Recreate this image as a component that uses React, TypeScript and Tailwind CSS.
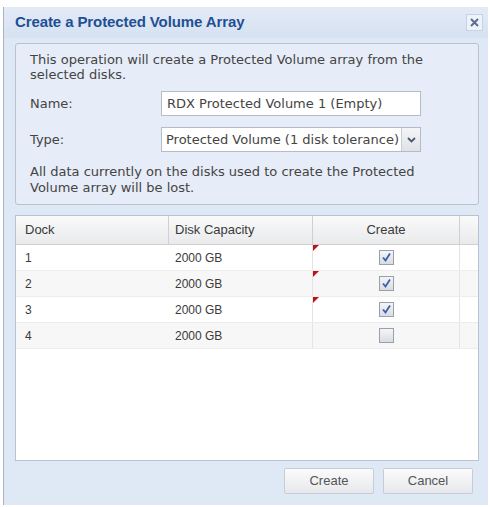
import React from "react";

const rows = [
  { dock: "1", cap: "2000 GB", checked: true, dirty: true },
  { dock: "2", cap: "2000 GB", checked: true, dirty: true },
  { dock: "3", cap: "2000 GB", checked: true, dirty: true },
  { dock: "4", cap: "2000 GB", checked: false, dirty: false },
];

function Check({ checked }: { checked: boolean }) {
  return (
    <div className="w-[15px] h-[15px] border border-[#9aa0aa] bg-gradient-to-b from-[#f4f5f7] to-[#d9dce1] flex items-center justify-center">
      {checked && (
        <svg width="11" height="11" viewBox="0 0 11 11">
          <path d="M2 5.5 L4.5 8.5 L9 1.5" fill="none" stroke="#3b5fb0" strokeWidth="1.8" />
        </svg>
      )}
    </div>
  );
}

export default function App() {
  return (
    <div
      className="w-[490px] h-[507px] bg-white pt-[7px] pl-[3px] pr-[2px] pb-[2px] text-[13px] text-[#3a3a3a]"
      style={{ fontFamily: "'Liberation Sans', Arial, sans-serif" }}
    >
      <div className="h-full flex flex-col border-l border-[#a9b4c2] bg-[#dfe8f5]">
        {/* Title bar */}
        <div className="h-[31px] flex items-center justify-between pl-[11px] pr-[5px] bg-gradient-to-b from-[#e3ebf6] to-[#d6e2f1]">
          <span className="font-bold text-[15px] tracking-[-0.1px] text-[#1f4f94]">Create a Protected Volume Array</span>
          <div className="w-[17px] h-[17px] flex items-center justify-center border border-[#c5d2e3] bg-[#eef3fa]">
            <svg width="11" height="11" viewBox="0 0 11 11">
              <path d="M2 2 L9 9 M9 2 L2 9" stroke="#5a6f8c" strokeWidth="2" />
            </svg>
          </div>
        </div>

        <div className="flex-1 flex flex-col px-[11px] pr-[9px]">
          {/* Fieldset */}
          <div
            className="mt-[5px] h-[162px] rounded-[3px] border border-[#b7c2d2] bg-[#e6edf8] pl-[14px] pr-[10px] pt-[8px] text-[13px] text-[#444]"
            style={{ fontFamily: "'DejaVu Sans', Verdana, sans-serif" }}
          >
            <p className="leading-[15px] whitespace-nowrap">
              This operation will create a Protected Volume array from the
              <br />
              selected disks.
            </p>
            <div className="mt-[9px] flex items-center h-[25px]">
              <span className="w-[131px]">Name:</span>
              <div className="w-[260px] h-[25px] border border-[#b5bcc7] bg-white px-[5px] flex items-center whitespace-nowrap">
                RDX Protected Volume 1 (Empty)
              </div>
            </div>
            <div className="mt-[11px] flex items-center h-[25px]">
              <span className="w-[131px]">Type:</span>
              <div className="w-[260px] h-[25px] border border-[#b5bcc7] bg-white flex items-center">
                <span className="flex-1 pl-[4px] overflow-hidden whitespace-nowrap">
                  Protected Volume (1 disk tolerance)
                </span>
                <div className="w-[19px] h-full border-l border-[#c8ccd3] bg-gradient-to-b from-[#f4f5f7] to-[#dfe2e7] flex items-center justify-center">
                  <svg width="9" height="6" viewBox="0 0 9 6">
                    <path d="M1 1 L4.5 4.5 L8 1" fill="none" stroke="#4a5a70" strokeWidth="1.8" />
                  </svg>
                </div>
              </div>
            </div>
            <p className="mt-[12px] leading-[16px] whitespace-nowrap">
              All data currently on the disks used to create the Protected
              <br />
              Volume array will be lost.
            </p>
          </div>

          {/* Grid */}
          <div className="mt-[10px] h-[246px] border border-[#b7c2d2] bg-white flex flex-col">
            <div className="h-[29px] flex bg-gradient-to-b from-[#fafafa] to-[#e9eaec] border-b border-[#d0d0d0]">
              <div className="w-[153px] pl-[9px] flex items-center border-r border-[#d0d0d0]">Dock</div>
              <div className="w-[144px] pl-[6px] flex items-center border-r border-[#d0d0d0]">Disk Capacity</div>
              <div className="w-[147px] flex items-center justify-center border-r border-[#d0d0d0]">Create</div>
              <div className="flex-1" />
            </div>
            {rows.map((r, i) => (
              <div
                key={r.dock}
                className={`h-[26px] flex text-[12px] border-b border-[#ededed] ${i % 2 === 1 ? "bg-[#f7f7f7]" : "bg-white"}`}
              >
                <div className="w-[153px] pl-[9px] flex items-center">{r.dock}</div>
                <div className="w-[144px] pl-[6px] flex items-center border-r border-[#e4e4e4]">{r.cap}</div>
                <div className="w-[147px] relative flex items-center justify-center border-r border-[#e4e4e4]">
                  {r.dirty && (
                    <div className="absolute left-0 top-0 w-0 h-0 border-t-[6px] border-t-[#c0101a] border-r-[6px] border-r-transparent" />
                  )}
                  <Check checked={r.checked} />
                </div>
              </div>
            ))}
            <div className="flex-1" />
          </div>

          {/* Buttons */}
          <div className="mt-[7px] flex justify-end gap-[9px] pr-[6px]">
            <button className="w-[90px] h-[26px] border border-[#c9cdd3] rounded-[2px] bg-gradient-to-b from-[#fbfbfc] to-[#e6e8eb] text-[13px] text-[#555]">
              Create
            </button>
            <button className="w-[90px] h-[26px] border border-[#c9cdd3] rounded-[2px] bg-gradient-to-b from-[#fbfbfc] to-[#e6e8eb] text-[13px] text-[#555]">
              Cancel
            </button>
          </div>
        </div>
      </div>
    </div>
  );
}
